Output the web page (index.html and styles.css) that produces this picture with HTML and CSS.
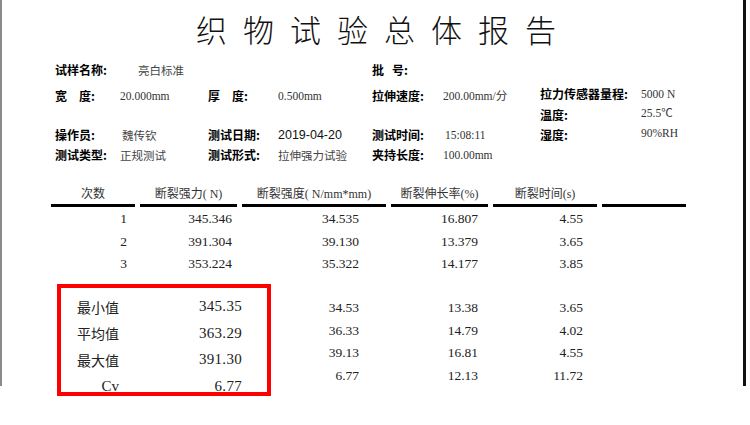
FILE: index.html
```html
<!DOCTYPE html>
<html lang="zh-CN">
<head>
<meta charset="utf-8">
<title>织物试验总体报告</title>
<link rel="stylesheet" href="styles.css">
</head>
<body>
<div class="page">
  <h1 class="title">织物试验总体报告</h1>

  <div class="info">
    <div class="lbl">试样名称:</div>
    <div class="val cn indent">亮白标准</div>
    <div></div><div></div>
    <div class="lbl"><span class="gap8">批</span>号:</div>
    <div></div><div></div><div></div>

    <div class="lbl">宽　度:</div>
    <div class="val">20.000mm</div>
    <div class="lbl">厚　度:</div>
    <div class="val">0.500mm</div>
    <div class="lbl">拉伸速度:</div>
    <div class="val">200.00mm/分</div>
    <div class="lbl up">拉力传感器量程:</div>
    <div class="val up">5000 N</div>

    <div></div><div></div><div></div><div></div><div></div><div></div>
    <div class="lbl">温度:</div>
    <div class="val up">25.5℃</div>

    <div class="lbl">操作员:</div>
    <div class="val cn nudge">魏传钦</div>
    <div class="lbl">测试日期:</div>
    <div class="val sans">2019-04-20</div>
    <div class="lbl">测试时间:</div>
    <div class="val nudge">15:08:11</div>
    <div class="lbl">湿度:</div>
    <div class="val up">90%RH</div>

    <div class="lbl">测试类型:</div>
    <div class="val cn">正规测试</div>
    <div class="lbl">测试形式:</div>
    <div class="val cn">拉伸强力试验</div>
    <div class="lbl">夹持长度:</div>
    <div class="val">100.00mm</div>
    <div></div><div></div>
  </div>

  <div class="table">
    <div class="th">次数</div>
    <div class="th">断裂强力( N)</div>
    <div class="th">断裂强度( N/mm*mm)</div>
    <div class="th">断裂伸长率(%)</div>
    <div class="th">断裂时间(s)</div>
    <div class="th"></div>

    <div class="td c1 first">1</div>
    <div class="td c2 first">345.346</div>
    <div class="td c3 first">34.535</div>
    <div class="td c4 first">16.807</div>
    <div class="td c5 first">4.55</div>
    <div class="td first"></div>

    <div class="td c1">2</div>
    <div class="td c2">391.304</div>
    <div class="td c3">39.130</div>
    <div class="td c4">13.379</div>
    <div class="td c5">3.65</div>
    <div class="td"></div>

    <div class="td c1">3</div>
    <div class="td c2">353.224</div>
    <div class="td c3">35.322</div>
    <div class="td c4">14.177</div>
    <div class="td c5">3.85</div>
    <div class="td"></div>
  </div>

  <div class="stats">
    <div class="redbox">
      <div class="srow"><span class="slbl">最小值</span><span class="snum">345.35</span></div>
      <div class="srow"><span class="slbl">平均值</span><span class="snum">363.29</span></div>
      <div class="srow"><span class="slbl">最大值</span><span class="snum">391.30</span></div>
      <div class="srow"><span class="slbl cv">Cv</span><span class="snum">6.77</span></div>
    </div>
    <div class="stack c3">
      <div>34.53</div><div>36.33</div><div>39.13</div><div>6.77</div>
    </div>
    <div class="stack c4">
      <div>13.38</div><div>14.79</div><div>16.81</div><div>12.13</div>
    </div>
    <div class="stack c5">
      <div>3.65</div><div>4.02</div><div>4.55</div><div>11.72</div>
    </div>
  </div>
</div>
</body>
</html>
```

FILE: styles.css
```css
* { box-sizing: border-box; }

html, body {
  margin: 0;
  padding: 0;
  background: #fff;
}

body {
  width: 750px;
  height: 425px;
  overflow: hidden;
  font-family: "Noto Sans CJK SC", sans-serif;
  color: #000;
}

.page {
  width: 746px;
  height: 386px;
  border-left: 2px solid #8a8a8a;
  border-right: 3px solid #111;
}

.title {
  margin: 0;
  padding: 13px 0 0 194px;
  height: 60px;
  font-size: 31px;
  line-height: 32px;
  font-weight: 300;
  letter-spacing: 16px;
  color: #111;
  white-space: nowrap;
}

.info {
  display: grid;
  grid-template-columns: 65px 88px 70px 94px 71px 97px 101px 1fr;
  grid-template-rows: 26px 19px 20px 20px 20px;
  padding-left: 53px;
  align-items: start;
}

.lbl {
  font-size: 12px;
  line-height: 20px;
  font-weight: 700;
  white-space: nowrap;
  color: #000;
}

.gap8 { margin-right: 8px; }

.val {
  font-family: "Liberation Serif", "Noto Sans CJK SC", serif;
  font-size: 11.5px;
  line-height: 20px;
  color: #333;
  white-space: nowrap;
}

.val.cn {
  font-family: "Noto Sans CJK SC", sans-serif;
  font-size: 11.5px;
  color: #444;
}

.val.sans {
  font-family: "Liberation Sans", sans-serif;
  font-size: 12.5px;
  color: #111;
}

.indent { padding-left: 18px; }
.nudge { padding-left: 2px; }
.up { margin-top: -2px; }

.table {
  display: grid;
  grid-template-columns: 84px 97px 144px 97px 104px 84px;
  column-gap: 5px;
  margin: 20px 0 0 49px;
}

.th {
  height: 22px;
  line-height: 19px;
  text-align: center;
  font-family: "Liberation Serif", "Noto Sans CJK SC", serif;
  font-size: 12px;
  color: #333;
  border-bottom: 3px solid #000;
  white-space: nowrap;
}

.td {
  height: 22.5px;
  line-height: 22.5px;
  text-align: right;
  font-family: "Liberation Serif", serif;
  font-size: 13.5px;
  color: #222;
}

.td.first { margin-top: 1px; }

.c1 { padding-right: 8px; }
.c2 { padding-right: 5px; }
.c3 { padding-right: 27px; }
.c4 { padding-right: 10px; }
.c5 { padding-right: 14px; }

.stats {
  display: grid;
  grid-template-columns: 84px 97px 144px 97px 104px 84px;
  column-gap: 5px;
  margin-left: 49px;
  align-items: start;
}

.redbox {
  grid-column: 1 / 3;
  grid-row: 1;
  justify-self: start;
  width: 214px;
  height: 112px;
  margin: 8px 0 0 6px;
  border: 4px solid #ff0000;
  padding: 6px 25px 0 16px;
  overflow: hidden;
}

.srow {
  display: flex;
  justify-content: space-between;
  align-items: center;
  height: 26.5px;
}

.slbl {
  width: 42px;
  text-align: right;
  font-size: 14px;
  color: #222;
  white-space: nowrap;
}

.slbl.cv {
  font-family: "Liberation Serif", serif;
  font-size: 15px;
}

.snum {
  font-family: "Liberation Serif", serif;
  font-size: 15px;
  letter-spacing: 0.3px;
  color: #222;
}

.stack {
  grid-row: 1;
  padding-top: 21.5px;
  text-align: right;
  font-family: "Liberation Serif", serif;
  font-size: 13.5px;
  color: #222;
}

.stack div {
  height: 22.7px;
  line-height: 22.7px;
}

.stack.c3 { grid-column: 3; }
.stack.c4 { grid-column: 4; }
.stack.c5 { grid-column: 5; }
```
